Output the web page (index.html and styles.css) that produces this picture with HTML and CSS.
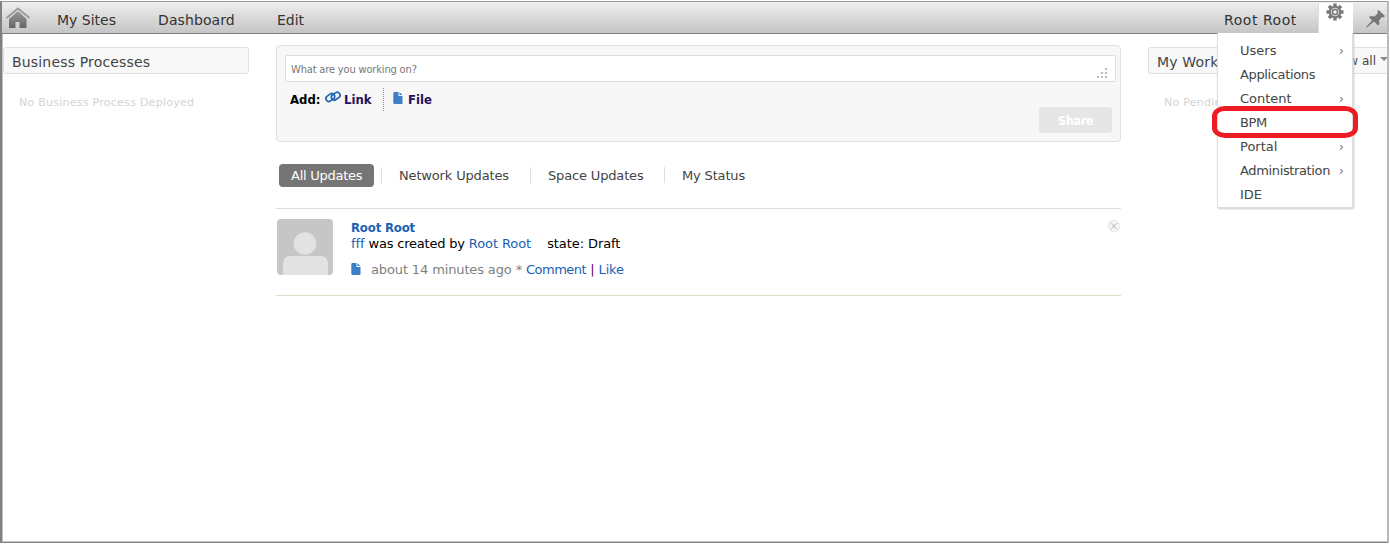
FILE: index.html
```html
<!DOCTYPE html>
<html lang="en">
<head>
<meta charset="utf-8">
<title>Dashboard</title>
<link rel="stylesheet" href="styles.css">
</head>
<body>
<div class="frame">
  <header class="toolbar">
    <svg class="home" width="26" height="22" viewBox="0 0 26 22"><defs><linearGradient id="g" x1="0" y1="0" x2="0" y2="1"><stop offset="0" stop-color="#999"/><stop offset="1" stop-color="#666"/></linearGradient></defs><path d="M1.500 11 13 1.500 24.500 11" fill="none" stroke="#999" stroke-width="2"/><path d="M13 4 4 12v9h6.500v-6h4v6h7v-9z" fill="url(#g)"/></svg>
    <nav class="nav"><a class="n1"><span>My Sites</span></a><a class="n2"><span>Dashboard</span></a><a class="n3"><span>Edit</span></a></nav>
    <div class="user"><span>Root Root</span></div>
    <div class="gear-tab">
      <svg width="18" height="18" viewBox="-9 -9 18 18"><g fill="#777"><path id="t" d="M-1.700-8.500h3.400V-5h-3.400zM-1.700 5h3.400v3.500h-3.400z"/><use href="#t" transform="rotate(45)"/><use href="#t" transform="rotate(90)"/><use href="#t" transform="rotate(135)"/></g><circle r="5.200" fill="#ddd" stroke="#777" stroke-width="2"/><circle r="2.500" fill="#fff" stroke="#777" stroke-width="1.500"/></svg>
    </div>
    <svg class="pin" width="20" height="18" viewBox="0 0 20 18"><path d="M12.500 0 19 6l-1.500 1.500-1.500-.5-3 3.500.500 3.500-1.500 1.500-4-4L1 17.500 0 17l6-6.500L3 7l1.500-1 4 .500L12 3l-.800-1.500z" fill="#777"/></svg>
  </header>
  <main class="columns">
    <aside class="left">
      <h2 class="heading"><span>Business Processes</span></h2>
      <p class="empty"><span>No Business Process Deployed</span></p>
    </aside>
    <section class="center">
      <div class="composer">
        <div class="input"><span>What are you working on?</span>
          <svg class="grip" width="10" height="10" fill="#bbb"><path d="M8 0h2v2H8zM4 4h2v2H4zM8 4h2v2H8zM0 8h2v2H0zM4 8h2v2H4zM8 8h2v2H8z"/></svg></div>
        <div class="add">
          <b class="lbl"><span>Add:</span></b>
          <svg class="chain" width="16" height="12" viewBox="0 0 16 12" fill="none" stroke="#1f66b5" stroke-width="1.700"><rect x="-4.600" y="-2.900" width="9.200" height="5.800" rx="2.900" transform="translate(5.300 6.500) rotate(-35)"/><rect x="-4.600" y="-2.900" width="9.200" height="5.800" rx="2.900" transform="translate(10.700 5.200) rotate(-35)"/></svg>
          <b class="link"><span>Link</span></b>
          <i class="dots"></i>
          <svg class="doc" width="10" height="12" viewBox="0 0 10 12"><path d="M1 0h4.500v4H9.500v7l-.5 1H1l-.7-1V1zM6.500.2 9.400 3H6.500z" fill="#3d7fc6"/></svg>
          <b class="file"><span>File</span></b>
        </div>
        <div class="share"><span>Share</span></div>
      </div>
      <div class="tabs">
        <a class="tab on"><span>All Updates</span></a><a class="tab t2"><span>Network Updates</span></a><a class="tab t3"><span>Space Updates</span></a><a class="tab t4"><span>My Status</span></a>
      </div>
      <article class="post">
        <svg class="avatar" width="56" height="56" viewBox="0 0 56 56"><rect width="56" height="56" rx="4" fill="#c6c6c6"/><circle cx="28" cy="24.500" r="11.300" fill="#e2e2e2"/><path d="M6 56V45q0-8 8-8h29q8 0 8 8v11z" fill="#e2e2e2"/></svg>
        <div class="body">
          <b class="author"><span>Root Root</span></b>
          <div class="line"><a>fff</a><span class="was">was created by</span><a>Root Root</a><span class="state">state: Draft</span></div>
          <div class="meta"><svg class="doc" width="10" height="12" viewBox="0 0 10 12"><path d="M1 0h4.500v4H9.500v7l-.5 1H1l-.7-1V1zM6.500.2 9.400 3H6.500z" fill="#3d7fc6"/></svg><span class="when">about 14 minutes ago *</span><a class="comment">Comment</a><span class="bar">|</span><a class="like">Like</a></div>
        </div>
        <svg class="close" width="14" height="14" viewBox="0 0 14 14"><circle cx="7" cy="7" r="6.500" fill="#eee"/><path d="m4 4 6 6m0-6-6 6" stroke="#fff" stroke-width="4"/><path d="m4 4 6 6m0-6-6 6" stroke="#ccc" stroke-width="1.500"/></svg>
      </article>
    </section>
    <aside class="right">
      <h2 class="heading"><span>My Work</span><span class="all">w all</span><i class="caret"></i></h2>
      <p class="empty"><span>No Pending</span></p>
    </aside>
  </main>
</div>
<ul class="menu">
  <li><span>Users</span><i>›</i></li><li><span class="tight">Applications</span></li><li><span>Content</span><i>›</i></li><li><span class="bpm">BPM</span></li><li><span>Portal</span><i>›</i></li><li><span class="tight">Administration</span><i>›</i></li><li><span>IDE</span></li>
</ul>
<div class="highlight"></div>
</body>
</html>
```
FILE: styles.css
```css
* { box-sizing: border-box; }
body { margin: 0; background: #fff; font: 13px/16px "DejaVu Sans", Verdana, sans-serif; color: #444; overflow: hidden; white-space: nowrap; }
h2, p, ul { margin: 0; padding: 0; font-weight: normal; }
i { font-style: normal; }
b { font-family: "DejaVu Sans Condensed", Tahoma, sans-serif; }
svg { display: block; flex: none; }
a { color: #1b5fb4; }
.frame { width: 1389px; height: 542px; margin-top: 1px; border: 1px solid #999; border-left: 2px solid #808080; border-right: 2px solid #b9b9b9; border-bottom: 1px solid #858585; box-shadow: inset 1px -1px #c4c4c4; }
.toolbar { height: 32px; display: flex; background: linear-gradient(#eee, #c5c5c5); border-bottom: 1px solid #7e7b80; font-size: 14px; line-height: 36px; color: #333; }
.home { margin: 5px 0 0 3px; }
.nav { display: flex; margin-left: 26px; flex: 1; }
.nav a { color: #333; }
.n1 { width: 101px; }
.n2 { width: 119px; letter-spacing: .1px; }
.user { width: 94px; letter-spacing: .55px; }
.gear-tab { width: 35px; height: 31px; margin-top: 1px; background: #fff; border-left: 1px solid #ddd; padding-left: 7px; }
.pin { margin: 8px 1px 0 13px; }
.columns { display: flex; }
.left { width: 246px; margin: 13px 0 0 1px; }
.heading { display: flex; height: 27px; border: 1px solid #e0e0e0; border-radius: 3px; background: #f8f8f8; padding-left: 8px; font-size: 14px; line-height: 29px; letter-spacing: .17px; color: #444; }
.empty { font-size: 11px; letter-spacing: .26px; color: #d3d3d3; margin: 21px 0 0 16px; }
.center { width: 845px; margin: 11px 0 0 27px; }
.composer { height: 97px; border: 1px solid #e0e0e0; border-radius: 4px; background: #f7f7f7; padding: 9px 4px 0 8px; }
.input { display: flex; justify-content: space-between; height: 27px; background: #fff; border: 1px solid #ddd; border-radius: 2px; padding: 0 8px 0 5px; font: 11px/27px "DejaVu Sans Condensed", Tahoma, sans-serif; letter-spacing: -.16px; color: #777; }
.grip { margin-top: 12px; }
.add { display: flex; margin: 6px 0 0 5px; height: 23px; line-height: 23px; color: #000; }
.lbl { width: 35px; }
.chain { margin-top: 3px; }
.link { margin-left: 3px; width: 39px; color: #26115c; }
.file { margin-left: 5px; color: #26115c; }
.dots { border-left: 1px dotted #999; margin-right: 9px; }
.add .doc { margin-top: 4px; }
.share { width: 73px; height: 26px; margin: -4px 4px 0 auto; background: #e6e6e6; border-radius: 3px; color: #fff; font: bold 13px/27px "DejaVu Sans Condensed", Tahoma, sans-serif; letter-spacing: -.6px; text-align: center; }
.tabs { display: flex; margin: 22px 0 0 3px; height: 23px; line-height: 24px; letter-spacing: -.16px; }
.tab { color: #444; }
.tab.on { background: #757575; color: #fff; border-radius: 4px; width: 95px; padding-left: 12px; margin-right: 7px; letter-spacing: -.25px; }
.t2, .t3, .t4 { background: linear-gradient(#ddd, #ddd) 0 3px / 1px 16px no-repeat; padding-left: 18px; }
.t2 { width: 149px; }
.t3 { width: 134px; }
.post { display: flex; margin-top: 21px; height: 88px; border-top: 1px solid #ddd; border-bottom: 1px solid #ddddca; padding: 10px 0 0 1px; }
.body { width: 774px; padding: 1px 0 0 18px; color: #000; }
.author { display: block; color: #1b5fb4; letter-spacing: -.15px; }
.line, .meta { display: flex; }
.line { letter-spacing: -.08px; }
.was { margin: 0 4px; letter-spacing: -.2px; }
.state { margin-left: 16px; }
.meta { margin-top: 10px; }
.meta .doc { margin-top: 1px; }
.when { color: #808080; margin: 0 4px 0 10px; letter-spacing: -.13px; }
.comment { letter-spacing: -.5px; }
.like { letter-spacing: -.2px; }
.bar { margin: 0 4px; color: #600060; }
.right { flex: 1; margin: 13px 0 0 27px; overflow: hidden; }
.right .heading { border-right: 0; border-radius: 3px 0 0 3px; }
.all { margin-left: auto; font-size: 12px; letter-spacing: 0; line-height: 27px; color: #444; }
.caret { border: 4px solid transparent; border-top-color: #888; height: 0; margin: 9px -1px 0 4px; }
.menu { position: absolute; left: 1217px; top: 33px; width: 136px; height: 175px; background: #fff; border: 1px solid #ddd; border-top: 0; box-shadow: 1px 1px 2px #ccc; list-style: none; padding: 6px 8px 0 22px; }
.menu li { display: flex; justify-content: space-between; height: 24px; line-height: 24px; }
.menu i { color: #777; }
.tight { letter-spacing: -.36px; }
.bpm { letter-spacing: -.4px; }
.highlight { position: absolute; left: 1212px; top: 106px; width: 146px; height: 32px; border: 5px solid #ed1c24; border-radius: 13px / 10px; }
```
